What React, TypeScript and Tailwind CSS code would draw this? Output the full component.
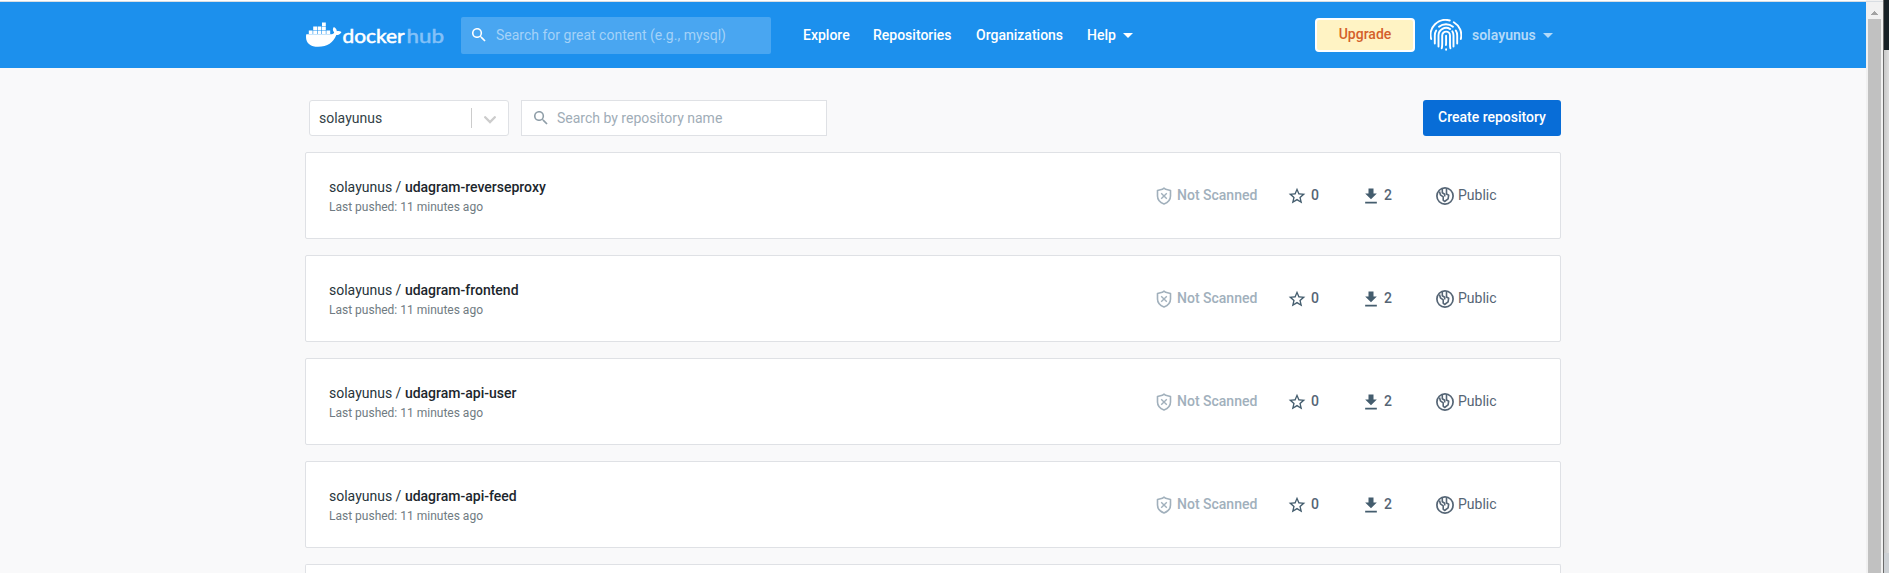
import React from "react";

const repositories = [
  "udagram-reverseproxy",
  "udagram-frontend",
  "udagram-api-user",
  "udagram-api-feed",
];

function DockerLogo() {
  return (
    <svg className="block h-[27px] w-[140px] shrink-0" viewBox="0 0 140 27">
      <g fill="#fff">
        <rect x="17" y="0.500" width="3.800" height="3.500" />
        <rect x="8.200" y="4.500" width="3.800" height="3.500" />
        <rect x="12.600" y="4.500" width="3.800" height="3.500" />
        <rect x="17" y="4.500" width="3.800" height="3.500" />
        <rect x="3.800" y="8.500" width="3.800" height="3.500" />
        <rect x="8.200" y="8.500" width="3.800" height="3.500" />
        <rect x="12.600" y="8.500" width="3.800" height="3.500" />
        <rect x="17" y="8.500" width="3.800" height="3.500" />
        <rect x="21.400" y="8.500" width="3.800" height="3.500" />
        <path d="M1.300 12.300h24.300c2 0 3.300-.8 3.600-1.900-1.600-1.500-1.800-3.400-.4-5.300 1.900 1.100 2.900 2.300 3 4.100 1.700-.4 3.500 0 4.700.7-.9 2-2.700 3.100-5.200 3.200C28.300 20.700 22.600 24.800 13.200 24.800 5.800 24.800 1 21.600 1 15c0-1 .1-1.900.3-2.700z" />
      </g>
      <text x="37.500" y="21.200" textLength="62" lengthAdjust="spacingAndGlyphs" fill="#fff" stroke="#fff" strokeWidth="0.500" className="font-['Lato',sans-serif] text-[18.500px] font-normal">docker</text>
      <text x="101.500" y="21.200" textLength="37.500" lengthAdjust="spacingAndGlyphs" fill="#84c1f8" stroke="#84c1f8" strokeWidth="0.500" className="font-['Lato',sans-serif] text-[18.500px] font-normal">hub</text>
    </svg>
  );
}

function SearchIcon({ className }: { className: string }) {
  return (
    <svg className={className} viewBox="0 0 18 18" fill="currentColor">
      <path d="M12.500 11h-.8l-.3-.3A6.500 6.500 0 1 0 10.700 11.400l.3.3v.8l5 5 1.500-1.500-5-5zm-6 0a4.500 4.500 0 1 1 0-9 4.500 4.500 0 0 1 0 9z" />
    </svg>
  );
}

function Caret({ className }: { className: string }) {
  return (
    <svg className={className} viewBox="0 0 10 5" fill="currentColor">
      <path d="M0 0h10L5 5z" />
    </svg>
  );
}

function Fingerprint() {
  return (
    <svg className="block size-8 shrink-0" viewBox="0 0 32 32" fill="none" stroke="#fff" strokeWidth="1.900" strokeLinecap="round">
      <path d="M1.200 20a15 15 0 0 1 18.600-18.500" />
      <path d="M23.800 3.200A15 15 0 0 1 30.800 20" />
      <path d="M4.800 24.500v-8c0-1.900.5-3.500 1.400-4.900M9 7.700a11.300 11.300 0 0 1 14 0M25.800 11.600c.9 1.400 1.400 3 1.400 4.900v8" />
      <path d="M8.500 27.500v-11a7.600 7.600 0 0 1 11.700-6.400M22.300 12.200c.8 1.200 1.200 2.700 1.200 4.300v11" />
      <path d="M11.700 29.300c.5-1.500.5-2.800.5-4.600v-8.200a3.900 3.900 0 0 1 7.800 0V25.500c0 1.500.1 2.700.4 3.800" />
      <path d="M16.100 16.700v7c0 1 0 1.500-.2 2.300M16.100 30.300v.5" />
    </svg>
  );
}

function ShieldIcon() {
  return (
    <svg className="-ml-px block h-[18px] w-4 shrink-0" viewBox="0 0 16 18" fill="none" stroke="#a1b0bc">
      <path d="M8 1.100l1.700 1.200 4.800 1.300v5.400c0 3.600-2.500 6.500-6.500 8-4-1.500-6.500-4.400-6.500-8V3.600l4.800-1.300z" strokeWidth="1.600" strokeLinejoin="round" />
      <path d="M5.200 6.200l5.600 5.600M10.800 6.200l-5.600 5.600" strokeWidth="1.400" />
    </svg>
  );
}

function GlobeIcon() {
  return (
    <svg className="block size-[18px] shrink-0" viewBox="0 0 18 18" fill="none" stroke="#556575" strokeLinejoin="round">
      <circle cx="9" cy="9" r="8.100" strokeWidth="1.700" />
      <path d="M3.500 4.500l.9 3.300 2.800 2v3.400l1.400 1.300 3.500-2.600.6-3.700-2.200-1.200V2" strokeWidth="1.600" />
      <path d="M6.300 2v3.700l2.400 1.500v2.300" strokeWidth="1.600" />
    </svg>
  );
}

function RepositoryCard({ name }: { name: string }) {
  return (
    <article className="flex h-[87px] shrink-0 rounded-[2px] border border-[#dfe1e5] bg-white pl-[23px]">
      <div className="w-[828px] pt-[25px]">
        <h2 className="text-[14px] leading-[18px] text-[#27343b]">
          solayunus / <span className="font-medium text-[#1c262d]">{name}</span>
        </h2>
        <p className="mt-[2px] text-[12px] leading-[18px] text-[#707b82]">Last pushed: 11 minutes ago</p>
      </div>
      <div className="flex h-[85px] items-center text-[14px] text-[#556575]">
        <div className="flex w-[130px] items-center gap-[5px] text-[#a1b0bc]">
          <ShieldIcon />
          <span className="font-medium">Not Scanned</span>
        </div>
        <div className="flex w-[74px] items-center gap-1">
          <svg className="block size-[20px]" viewBox="0 0 24 24" fill="#445d6e">
            <path d="M22 9.240l-7.190-.62L12 2 9.190 8.630 2 9.240l5.460 4.730L5.820 21 12 17.270 18.180 21l-1.630-7.030L22 9.240zM12 15.400l-3.760 2.270 1-4.280-3.320-2.880 4.380-.38L12 6.100l1.710 4.040 4.380.38-3.320 2.880 1 4.280L12 15.400z" />
          </svg>
          <span className="font-medium">0</span>
        </div>
        <div className="flex w-[75px] items-center gap-[3px]">
          <svg className="block size-[20px]" viewBox="0 0 24 24" fill="#445d6e">
            <path d="M5 21h14v-2H5v2zM19 9h-4V3H9v6H5l7 7 7-7z" />
          </svg>
          <span className="font-medium">2</span>
        </div>
        <div className="flex items-center gap-1">
          <GlobeIcon />
          <span>Public</span>
        </div>
      </div>
    </article>
  );
}

export default function App() {
  return (
    <div className="flex h-[573px] w-[1889px] overflow-hidden bg-[#f9f9fa] font-['Roboto',sans-serif] text-[14px]">
      <div className="flex w-[1866px] flex-col">
        <div className="h-px shrink-0 bg-white" />
        <div className="h-px shrink-0 bg-[#d8dde2]" />
        <header className="flex h-[66px] shrink-0 items-center bg-[#1c90ed] pl-[305px] font-medium text-white">
          <DockerLogo />
          <div className="ml-4 flex h-[37px] w-[310px] items-center rounded-[2px] bg-[#49a6f1] pl-[11px]">
            <SearchIcon className="block size-[14px] text-white" />
            <span className="ml-[10px] font-normal text-[#a4d2f8]">Search for great content (e.g., mysql)</span>
          </div>
          <nav className="flex w-[544px] items-center pl-8">
            <span className="w-[70px]">Explore</span>
            <span className="w-[103px]">Repositories</span>
            <span className="w-[111px]">Organizations</span>
            <span>Help</span>
            <Caret className="ml-[7px] block h-[5px] w-[10px]" />
          </nav>
          <button className="h-[34px] w-[100px] rounded-[4px] border-2 border-white bg-[#fff3c4] pb-px text-[#d4602a]">Upgrade</button>
          <div className="ml-[15px] flex items-center">
            <Fingerprint />
            <span className="ml-[10px] font-semibold text-[#b3daf9]">solayunus</span>
            <Caret className="ml-[7px] block h-[5px] w-[10px] text-[#b3daf9]" />
          </div>
        </header>
        <main className="flex w-[1561px] grow flex-col gap-4 pl-[305px] pt-8">
          <div className="flex h-9 shrink-0 items-center pl-1">
            <div className="flex h-9 w-[200px] items-center rounded-[3px] border border-[#dfe1e5] bg-white pl-[9px]">
              <span className="w-[152px] text-[#333f47]">solayunus</span>
              <span className="h-5 w-px bg-[#ccc]" />
              <svg className="ml-3 mt-[3px] block h-[8px] w-[12px]" viewBox="0 0 12 8" fill="none" stroke="#ccc" strokeWidth="2.300" strokeLinecap="round">
                <path d="M1.200 1.200L6 6l4.800-4.800" />
              </svg>
            </div>
            <div className="ml-3 flex h-9 w-[306px] items-center border border-[#dfe1e5] bg-white pl-3">
              <SearchIcon className="block size-[14px] text-[#8f9ea8]" />
              <span className="ml-[9px] text-[#9fadb7]">Search by repository name</span>
            </div>
            <button className="ml-auto h-9 w-[138px] rounded-[3px] bg-[#086dd7] pb-px font-medium text-white">Create repository</button>
          </div>
          {repositories.map((name) => (
            <RepositoryCard key={name} name={name} />
          ))}
          <div className="grow rounded-t-[2px] border border-b-0 border-[#dfe1e5] bg-white" />
        </main>
      </div>
      <div className="flex w-[17px] flex-col bg-[#f1f1f1] px-[2px]">
        <div className="h-px shrink-0" />
        <div className="-mx-[2px] h-px shrink-0 bg-[#d8dde2]" />
        <div className="flex h-[17px] shrink-0 items-center justify-center pt-1">
          <svg className="block h-1 w-[7px]" viewBox="0 0 7 4" fill="#a3a3a3">
            <path d="M0 4V3h1V2h1V1h1V0h1v1h1v1h1v1h1v1z" />
          </svg>
        </div>
        <div className="grow bg-[#c1c1c1]" />
      </div>
      <div className="w-px bg-[#6b6b6b]" />
      <div className="flex grow flex-col">
        <div className="h-[50px] bg-[#172126]" />
        <div className="h-[503px] bg-gradient-to-r from-[#c8c8c8] to-[#dedede]" />
        <div className="grow bg-[#cdd1d5]" />
      </div>
    </div>
  );
}
